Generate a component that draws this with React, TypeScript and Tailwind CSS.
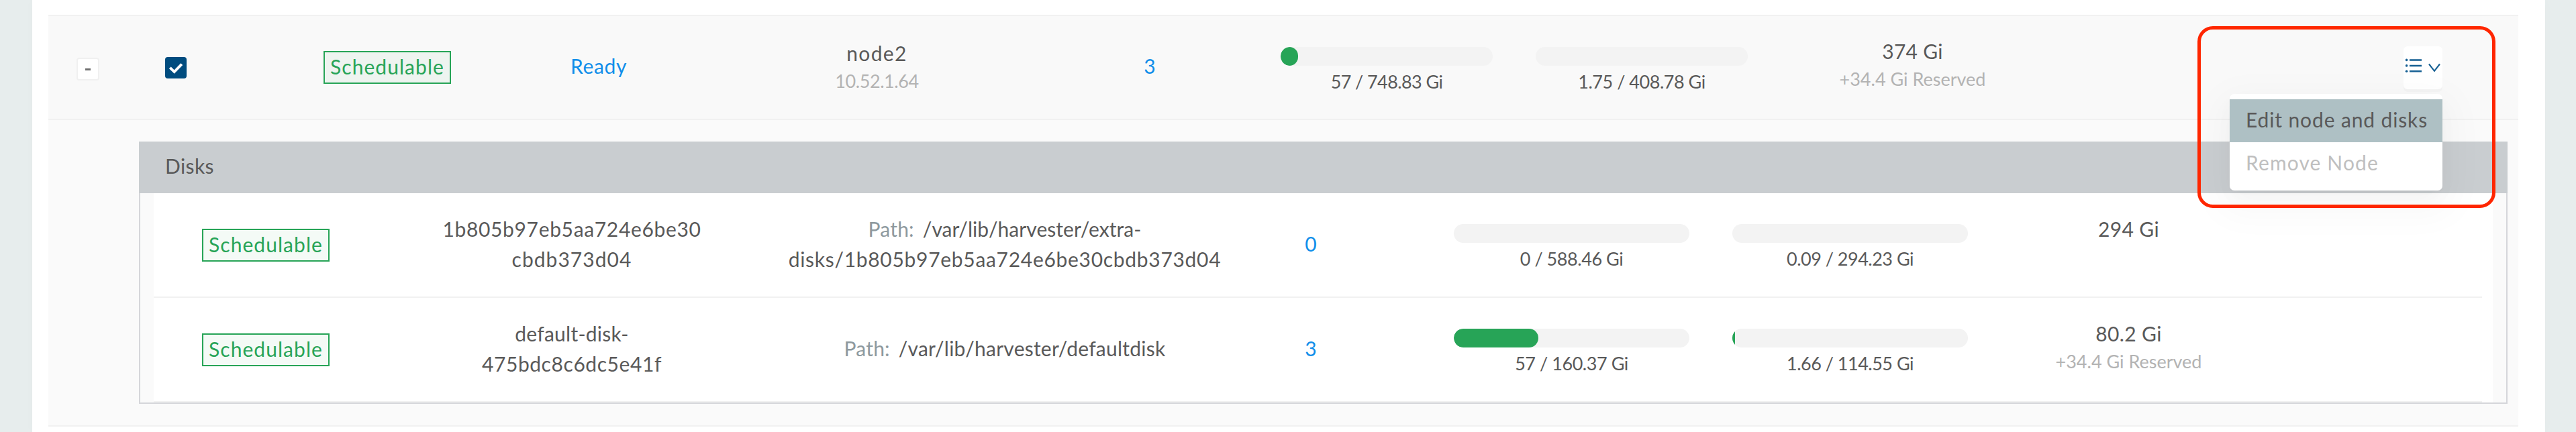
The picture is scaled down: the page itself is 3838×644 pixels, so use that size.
import type { ReactNode } from "react";

function Badge() {
  return (
    <div className="flex h-[49px] w-[190px] justify-center border-2 border-[#27a457] bg-[#27a457]/5 leading-[42px] tracking-[1.05px] text-[#27a457]">
      Schedulable
    </div>
  );
}

function Cell({ className, children }: { className: string; children?: ReactNode }) {
  return <div className={`flex shrink-0 flex-col items-center ${className}`}>{children}</div>;
}

function Usage({ width, fill, label, labelClass }: { width: string; fill: string; label: string; labelClass: string }) {
  return (
    <>
      <div className={`h-7 overflow-hidden rounded-full bg-[#f3f3f3] ${width}`}>
        <div className={`h-7 bg-[#27a457] ${fill}`} />
      </div>
      <div className={`mt-1 text-[27px] leading-[39px] ${labelClass}`}>{label}</div>
    </>
  );
}

function Reserved() {
  return <div className="text-[27px] leading-[38px] text-[#b3b3b3]">+34.4 Gi Reserved</div>;
}

type Disk = {
  name: [string, string];
  nameClass: [string, string];
  path: [string, string?];
  pathClass: string;
  pathTop: string;
  replicas: number;
  allocated: { fill: string; label: string };
  used: { fill: string; label: string };
  size: string;
  reserved: boolean;
};

const disks: Disk[] = [
  {
    name: ["1b805b97eb5aa724e6be30", "cbdb373d04"],
    nameClass: ["tracking-[0.65px]", "tracking-[1.04px]"],
    path: ["/var/lib/harvester/extra-", "disks/1b805b97eb5aa724e6be30cbdb373d04"],
    pathClass: "tracking-[0.06px]",
    pathTop: "pt-[31px]",
    replicas: 0,
    allocated: { fill: "w-0", label: "0 / 588.46 Gi" },
    used: { fill: "w-0", label: "0.09 / 294.23 Gi" },
    size: "294 Gi",
    reserved: false,
  },
  {
    name: ["default-disk-", "475bdc8c6dc5e41f"],
    nameClass: ["tracking-[0.24px]", "tracking-[0.57px]"],
    path: ["/var/lib/harvester/defaultdisk"],
    pathClass: "tracking-[0.23px]",
    pathTop: "pt-[53px]",
    replicas: 3,
    allocated: { fill: "w-[126px] rounded-full", label: "57 / 160.37 Gi" },
    used: { fill: "w-[4px]", label: "1.66 / 114.55 Gi" },
    size: "80.2 Gi",
    reserved: true,
  },
];

function DiskRow({ disk }: { disk: Disk }) {
  return (
    <div className="flex h-[156px] w-[3469px] border-b-2 border-[#f1f1f1]">
      <Cell className="w-[334px] pt-[53px]">
        <Badge />
      </Cell>
      <Cell className="w-[578px] pt-[31px]">
        <div className={disk.nameClass[0]}>{disk.name[0]}</div>
        <div className={disk.nameClass[1]}>{disk.name[1]}</div>
      </Cell>
      <Cell className={`w-[712px] ${disk.pathTop}`}>
        <div className="flex">
          <span className="mr-[13px] tracking-[0.19px] text-[#8d999e]">Path:</span>
          <span className={disk.pathClass}>{disk.path[0]}</span>
        </div>
        {disk.path[1] && <div className="tracking-[0.7px]">{disk.path[1]}</div>}
      </Cell>
      <Cell className="mr-[81px] w-[200px] pt-[53px] text-[#108eea]">{disk.replicas}</Cell>
      <Cell className="w-[415px] pt-[46px]">
        <Usage width="w-[351px]" fill={disk.allocated.fill} label={disk.allocated.label} labelClass="tracking-[-0.45px]" />
      </Cell>
      <Cell className="w-[415px] pt-[46px]">
        <Usage width="w-[351px]" fill={disk.used.fill} label={disk.used.label} labelClass="tracking-[-0.5px]" />
      </Cell>
      <Cell className="w-[415px] pt-[31px]">
        <div className="tracking-[0.37px]">{disk.size}</div>
        {disk.reserved && <Reserved />}
      </Cell>
    </div>
  );
}

function ActionMenu() {
  return (
    <div className="relative h-16 w-[58px] rounded-[6px] bg-white shadow-[0_4px_0_rgba(0,0,0,0.02)]">
      <svg className="h-16 w-[58px]" viewBox="0 0 58 64" fill="none" stroke="#155f93">
        <g strokeWidth="2.5">
          <path d="M9 20.4h18M9 28.9h18M9 37.2h18" />
        </g>
        <g fill="#155f93" stroke="none">
          <circle cx="4.6" cy="20.4" r="1.8" />
          <circle cx="4.6" cy="28.9" r="1.8" />
          <circle cx="4.6" cy="37.2" r="1.8" />
        </g>
        <path d="M38 26.5l8 10.3 8-10.3" strokeWidth="2.1" />
      </svg>
      <div className="absolute top-[71px] right-0 z-10 h-36 w-[317px] rounded-[7px] bg-white pt-2 shadow-[0_6px_12px_-8px_rgba(0,0,0,0.06),0_12px_32px_rgba(0,0,0,0.02),0_18px_56px_16px_rgba(0,0,0,0.03)]">
        <div className="h-16 bg-[#aec0c4] pl-6 leading-[60px] tracking-[0.87px]">Edit node and disks</div>
        <div className="h-16 pl-6 leading-[60px] tracking-[1.12px] text-[#bfbfbf]">Remove Node</div>
      </div>
      <div className="absolute top-[-30px] right-[-79px] z-20 h-[271px] w-[444px] rounded-[23px] border-[5.5px] border-[#ff2600]" />
    </div>
  );
}

function NodeRow() {
  return (
    <div className="flex h-[157px] border-y-2 border-[#f1f1f1] bg-[#f9f9f9]">
      <Cell className="w-[118px] pt-[62px]">
        <div className="flex h-[34px] w-[34px] items-center justify-center rounded-[4px] border-2 border-[#f0f0f0] bg-white">
          <div className="h-[3px] w-[8px] bg-[#6f6f6f]" />
        </div>
      </Cell>
      <Cell className="w-[144px] pt-[61px]">
        <div className="h-8 w-8 rounded-[4px] bg-[#004c7f]">
          <svg className="h-8 w-8" viewBox="0 0 32 32" fill="none" stroke="#fff" strokeWidth="3.9">
            <path d="M7.3 15.8l6.4 6.3L24.8 10.6" />
          </svg>
        </div>
      </Cell>
      <Cell className="w-[486px] pt-[52px]">
        <Badge />
      </Cell>
      <Cell className="w-[144px] pt-[52px] tracking-[0.66px] text-[#108eea]">Ready</Cell>
      <Cell className="w-[685px] pt-[33px]">
        <div className="tracking-[1.33px]">node2</div>
        <div className="text-[27px] leading-[38px] tracking-[-0.41px] text-[#b3b3b3]">10.52.1.64</div>
      </Cell>
      <Cell className="mr-[99px] w-[128px] pt-[52px] text-[#108eea]">3</Cell>
      <Cell className="w-[380px] pt-[46px]">
        <Usage width="w-[316px]" fill="w-[26px] rounded-full" label="57 / 748.83 Gi" labelClass="tracking-[-0.6px]" />
      </Cell>
      <Cell className="w-[380px] pt-[46px]">
        <Usage width="w-[316px]" fill="w-0" label="1.75 / 408.78 Gi" labelClass="tracking-[-0.47px]" />
      </Cell>
      <Cell className="w-[427px] pt-[30px]">
        <div className="tracking-[0.26px]">374 Gi</div>
        <Reserved />
      </Cell>
      <div className="flex grow justify-end pt-[45px] pr-[113px]">
        <ActionMenu />
      </div>
    </div>
  );
}

export default function App() {
  return (
    <div className="flex h-[644px] w-[3838px] overflow-hidden bg-[#e7eded] font-[Lato,sans-serif] text-[30px] leading-[45px] whitespace-nowrap text-[#595959]">
      <main className="ml-12 h-full w-[3744px] bg-white pt-[22px] pr-10 pl-6 shadow-[0_0_16px_rgba(0,0,0,0.02)]">
        <NodeRow />
        <section className="h-[457px] border-b-2 border-[#f1f1f1] bg-[#fafafa] pt-8 pr-4 pl-[135px]">
          <div className="h-[391px] border-x-2 border-b-2 border-[#d5d6da] bg-[#fafafa]">
            <h2 className="mx-[-2px] h-[77px] bg-[#c9cdd0] pl-[39px] leading-[73px] tracking-[0.39px]">Disks</h2>
            <div className="mr-5 ml-5 bg-white">
              {disks.map((disk) => (
                <DiskRow key={disk.name[0]} disk={disk} />
              ))}
            </div>
          </div>
        </section>
      </main>
    </div>
  );
}
